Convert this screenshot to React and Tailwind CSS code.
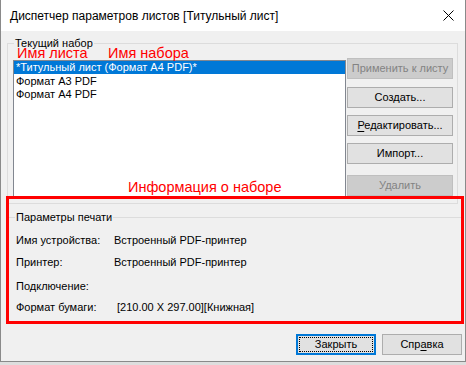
import React from "react";

function Btn({ children, disabled, className = "" }) {
  return (
    <div
      className={
        "w-[106px] h-[21px] flex items-center justify-center border text-[11px] leading-none whitespace-nowrap " +
        (disabled
          ? "bg-[#cccccc] border-[#bfbfbf] text-[#838383] "
          : "bg-[#e1e1e1] border-[#adadad] text-black ") +
        className
      }
    >
      {children}
    </div>
  );
}

export default function App() {
  return (
    <div className="w-[466px] h-[365px] bg-[#dedede] relative overflow-hidden font-['Liberation_Sans',Arial,sans-serif] text-[11px] text-black">
      {/* title bar */}
      <div className="h-[31px] bg-white flex items-center justify-between pl-[9px] pr-[11px] border-x border-[#8a8a8a]">
        <span className="text-[12px] leading-none">Диспетчер параметров листов [Титульный лист]</span>
        <svg width="11" height="11" viewBox="0 0 11 11">
          <path d="M0.5 0.5 L10.5 10.5 M10.5 0.5 L0.5 10.5" stroke="#000" strokeWidth="1" />
        </svg>
      </div>
      {/* body */}
      <div className="h-[331px] bg-[#f0f0f0] border-x border-b border-[#8a8a8a] flex flex-col">
        {/* group 1 */}
        <div className="relative mt-[12px] ml-[6px] w-[451px] h-[161px] border border-[#dcdcdc]">
          <span className="absolute -top-[8px] left-[6px] bg-[#f0f0f0] px-[1px] leading-[14px]">Текущий набор</span>
          <div className="flex items-start pl-[5px] pt-[14px]">
            <div className="mt-[2px] w-[333px] h-[137px] bg-white border border-[#828790] flex flex-col">
              <div className="h-[13px] bg-[#0078d7] text-white leading-[13px] pl-[2px]">*Титульный лист (Формат A4 PDF)*</div>
              <div className="h-[14px] leading-[14px] pl-[2px]">Формат А3 PDF</div>
              <div className="h-[13px] leading-[13px] pl-[2px]">Формат А4 PDF</div>
            </div>
            <div className="ml-[1px] flex flex-col">
              <Btn disabled>Применить к листу</Btn>
              <Btn className="mt-[8px]">Создать...</Btn>
              <Btn className="mt-[7px]">
                <span><span className="underline underline-offset-2">Р</span>едактировать...</span>
              </Btn>
              <Btn className="mt-[7px]">Импорт...</Btn>
              <Btn disabled className="mt-[11px]">Удалить</Btn>
            </div>
          </div>
        </div>
        {/* group 2 */}
        <div className="relative mt-[13px] ml-[7px] w-[454px] h-[105px] border border-[#dcdcdc]">
          <span className="absolute -top-[8px] left-[6px] bg-[#f0f0f0] px-[1px] leading-[14px]">Параметры печати</span>
          <div className="flex flex-col pl-[7px] pt-[15px] leading-[14px]">
            <div className="flex">
              <span className="w-[98px]">Имя устройства:</span>
              <span>Встроенный PDF-принтер</span>
            </div>
            <div className="flex mt-[8px]">
              <span className="w-[98px]">Принтер:</span>
              <span>Встроенный PDF-принтер</span>
            </div>
            <div className="flex mt-[10px]">
              <span className="w-[98px]">Подключение:</span>
            </div>
            <div className="flex mt-[7px]">
              <span className="w-[98px]">Формат бумаги:</span>
              <span className="ml-[3px]">[210.00 X 297.00][Книжная]</span>
            </div>
          </div>
        </div>
        {/* bottom buttons */}
        <div className="flex justify-end pr-[3px] mt-[12px] gap-[6px]">
          <div className="w-[80px] h-[21px] border-2 border-[#0078d7] bg-[#e1e1e1] p-[1px]">
            <div className="w-full h-full border border-dotted border-black flex items-center justify-center leading-none">Закрыть</div>
          </div>
          <div className="w-[80px] h-[21px] border border-[#adadad] bg-[#e1e1e1] flex items-center justify-center leading-none">
            <span>Спр<span className="underline underline-offset-2">а</span>вка</span>
          </div>
        </div>
      </div>

      {/* annotations */}
      <div className="absolute left-[6px] top-[196px] w-[458px] h-[128px] border-[3px] border-[#ff0000]" />
      <span className="absolute left-[17px] top-[46px] text-[14.5px] leading-none text-[#ff0000]">Имя листа</span>
      <span className="absolute left-[108px] top-[46px] text-[14.5px] leading-none text-[#ff0000]">Имя набора</span>
      <span className="absolute left-[128px] top-[180px] text-[14.5px] leading-none text-[#ff0000]">Информация о наборе</span>
    </div>
  );
}
